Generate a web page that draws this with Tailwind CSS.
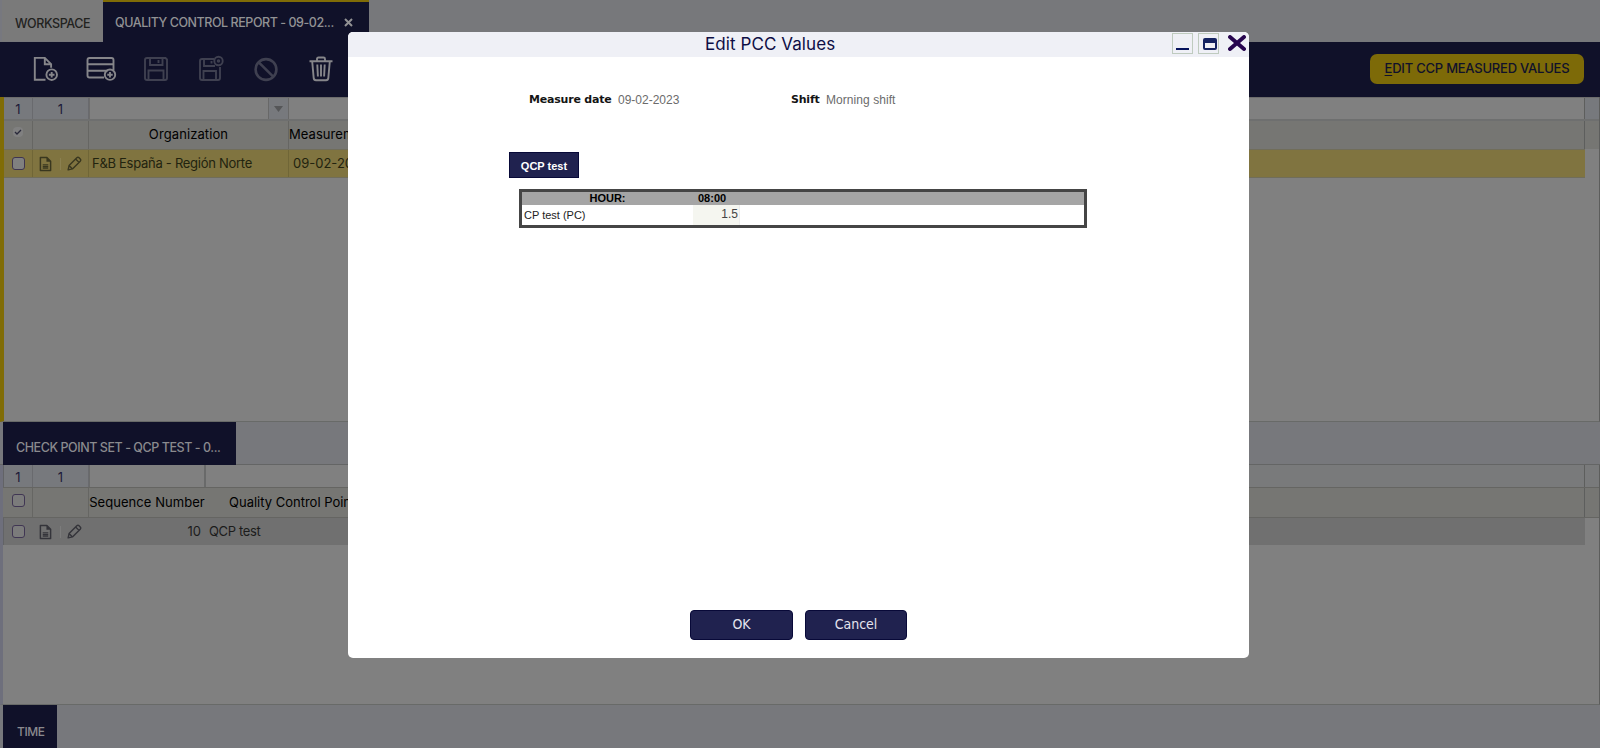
<!DOCTYPE html>
<html lang="en">
<head>
<meta charset="utf-8">
<title>Edit PCC Values</title>
<script src="https://cdn.jsdelivr.net/npm/@tailwindcss/browser@4"></script>
</head>
<body class="relative w-[1600px] h-[748px] overflow-hidden bg-[#808080] font-['Inter',sans-serif] text-[13px] text-black whitespace-nowrap">
<svg class="hidden">
  <symbol id="doc" viewBox="0 0 14 16"><path d="M1.500 1h7L12.500 5V15H1.500z" fill="none" stroke="currentColor" stroke-width="1.600" stroke-linejoin="round"/><path d="M8 1v4.500h4.500z" fill="currentColor"/><path d="M4 9h6M4 10.800h6M4 12.500h6" stroke="currentColor" stroke-width="1.300"/></symbol>
  <symbol id="pen" viewBox="0 0 16 16"><path d="M1.200 14.800l1-4.600 8.300-8.300q1.200-1.100 2.400 0l1.200 1.200q1.100 1.200 0 2.400l-8.300 8.300zM2.200 10.200l3.600 3.600M9.200 3.200l3.600 3.600" fill="none" stroke="currentColor" stroke-width="1.500" stroke-linejoin="round"/></symbol>
</svg>

<div class="flex flex-col h-full">
  <!-- Window tabs -->
  <div class="flex h-[42px] bg-[#77787b] shrink-0">
    <div class="w-[103px] h-[41px] bg-[#7a7a7a] border-l-2 border-[#77787f] pl-[13px] pt-[14px] leading-5 text-[12.500px] tracking-[-0.4px] font-medium text-[#22221f]">WORKSPACE</div>
    <div class="w-[266px] bg-[#101129] border-t-2 border-[#806c06] flex pl-3 pt-[10px] leading-[21px] text-[12.500px] font-medium text-[#929294]">
      <span class="w-[219px] tracking-[-0.45px]">QUALITY CONTROL REPORT - 09-02...</span>
      <svg class="ml-[10px] mt-[6px] size-[9px]" viewBox="0 0 9 9"><path d="M1 1l7 7M8 1l-7 7" stroke="#929294" stroke-width="2"/></svg>
    </div>
  </div>

  <!-- Toolbar -->
  <div class="flex h-[55px] bg-[#101129] shrink-0 items-start pl-[33px] pr-[15px] text-[#86868a]">
    <svg class="w-[26px] h-[26px] mt-[14px]" viewBox="0 0 26 26" fill="none" stroke="currentColor" stroke-width="1.900"><path d="M12.500 23.800H1.800V1.900h10l6.300 6.300v3.600M11.800 1.900v6.300h6.300"/><circle cx="18.700" cy="18.700" r="5.300"/><path d="M18.700 15.900v5.600M15.900 18.700h5.600"/></svg>
    <svg class="w-[31px] h-[26px] mt-[14px] ml-[27px]" viewBox="0 0 31 26" fill="none" stroke="currentColor" stroke-width="1.900"><path d="M18 21.500H3.500q-2 0-2-2V4q0-2 2-2h22q2 0 2 2v10M1.500 8.300h26M1.500 14.700h20"/><circle cx="24" cy="18.700" r="5.200"/><path d="M24 16v5.400M21.300 18.700h5.400"/></svg>
    <svg class="w-[26px] h-[26px] mt-[14px] ml-[26px] text-[#3f4050]" viewBox="0 0 26 26" fill="none" stroke="currentColor" stroke-width="1.900"><path d="M4 2h18.500L24 3.500V22q0 2-2 2H4q-2 0-2-2V4q0-2 2-2zM7 2v7h12.500V2M5.500 24v-9.500h15V24M15.500 4v3"/></svg>
    <svg class="w-[28px] h-[28px] mt-[13px] ml-[28px] text-[#3f4050]" viewBox="0 0 28 28" fill="none" stroke="currentColor" stroke-width="1.900"><path d="M17 4H5Q3 4 3 6v17q0 2 2 2h16q2 0 2-2V12M7 4v7h11M6.500 25v-9h12.500v9M14.500 6v2.500"/><circle cx="21.500" cy="6" r="4.200"/><circle cx="21.500" cy="6" r=".8"/></svg>
    <svg class="w-[26px] h-[26px] mt-[14px] ml-[27px] text-[#3f4050]" viewBox="0 0 26 26" fill="none" stroke="currentColor" stroke-width="2.600"><circle cx="14" cy="13.500" r="10.400"/><path d="M6.800 6.300l14.400 14.400"/></svg>
    <svg class="w-[24px] h-[26px] mt-[14px] ml-[31px]" viewBox="0 0 24 26" fill="none" stroke="currentColor" stroke-width="1.900"><path d="M.5 5.300h23M8 5V3q0-1.500 1.500-1.500h5Q16 1.500 16 3v2M3.200 5.500l1.500 16.700q.2 2 2.200 2h10.200q2 0 2.200-2L20.800 5.500M8.300 8.500l.6 12M12 8.500v12M15.700 8.500l-.6 12"/></svg>
    <div class="ml-auto mr-[1px] mt-[12px] w-[214px] h-[30px] rounded-[7px] bg-[#7d6a08] text-[#10112b] text-[13px] font-medium leading-[29px] text-center tracking-[-0.23px]"><span class="underline underline-offset-2">E</span>DIT CCP MEASURED VALUES</div>
  </div>

  <!-- Header grid -->
  <div class="h-[325px] shrink-0 border-l-4 border-l-[#806c06] border-r border-r-[#5c5d5c] border-b border-b-[#686a68]">
    <div class="flex h-[22px] border-t border-[#6c6c6c] bg-[#77797d] text-[#1c1a38] text-center leading-[23px]">
      <div class="w-[29px] border-r border-[#696a6e]">1</div>
      <div class="w-[56px] border-r border-[#696a6e]">1</div>
      <div class="w-[179px] bg-[#808080] border-l border-[#6c6c6c]"></div>
      <div class="w-[21px] border-x border-[#686868] flex items-center justify-center"><svg class="w-[9px] h-[6px]" viewBox="0 0 9 6"><path d="M0 0h9L4.500 6z" fill="#555658"/></svg></div>
      <div class="flex-1 bg-[#808080] border-r border-[#5d5e5d]"></div>
      <div class="w-[14px]"></div>
    </div>
    <div class="flex h-[30px] bg-[#767673] border-t-2 border-[#6e6f6f] leading-[27px]">
      <div class="w-[29px] border-r border-[#666663] pl-[9px] pt-[6px]"><div class="size-[10px] bg-[#808080] rounded-sm"><svg viewBox="0 0 10 10"><path d="M2 5l2 2 4-4" fill="none" stroke="#29293a" stroke-width="1.300"/></svg></div></div>
      <div class="w-[56px] border-r border-[#666663]"></div>
      <div class="w-[200px] border-r border-[#666663] text-center tracking-[0.1px]">Organization</div>
      <div class="flex-1 border-r border-[#5d5e5d] tracking-[0.06px]">Measurement Date</div>
      <div class="w-[14px]"></div>
    </div>
    <div class="flex h-[29px] mr-[14px] bg-[#807440] border-y border-[#706d5a] leading-[27px] text-[#22230f]">
      <div class="w-[29px] border-r border-[#706637] flex items-center justify-center"><div class="size-[13px] rounded-[3px] border border-[#3f3550] bg-[#808080]"></div></div>
      <div class="w-[56px] border-r border-[#706637] flex items-center pl-[6px] text-[#39371f]"><svg class="w-[13px] h-[16px]"><use href="#doc"/></svg><div class="w-px h-3 bg-[#8b8050] ml-2"></div><svg class="size-[15px] ml-[6px]"><use href="#pen"/></svg></div>
      <div class="w-[200px] border-r border-[#706637] pl-[3px] tracking-[-0.28px]">F&amp;B España - Región Norte</div>
      <div class="pl-1">09-02-2023</div>
    </div>
  </div>

  <!-- Child tab bar -->
  <div class="h-[43px] shrink-0 bg-[#77787c] border-b border-[#646565] pl-[3px]">
    <div class="w-[233px] h-[43px] bg-[#101129] pl-[13px] pt-[15px] leading-[22px] text-[12.500px] tracking-[-0.44px] font-medium text-[#8a8a8e]">CHECK POINT SET - QCP TEST - 0...</div>
  </div>

  <!-- Lines grid -->
  <div class="h-[240px] shrink-0 border-l-[3px] border-l-[#6e6f7c] border-r border-r-[#5c5d5c] border-b border-b-[#686a68]">
    <div class="flex h-[22px] bg-[#797a7b] border-l border-[#626366] text-[#1c1a38] text-center leading-[24px]">
      <div class="w-[29px] bg-[#77797d] border-r border-[#696a6e]">1</div>
      <div class="w-[56px] bg-[#77797d] border-r border-[#696a6e]">1</div>
      <div class="w-[117px] bg-[#808080] border-l border-r-2 border-[#696a6a]"></div>
      <div class="w-[200px] bg-[#808080]"></div>
      <div class="flex-1 border-r border-[#5d5e5d]"></div>
      <div class="w-[14px]"></div>
    </div>
    <div class="flex h-[31px] bg-[#767673] border-t border-b border-[#656562] leading-[28px]">
      <div class="w-[30px] border-r border-[#666663] pl-[9px] pt-[6px]"><div class="size-[13px] rounded-[3px] border border-[#403653] bg-[#7b7b7b]"></div></div>
      <div class="w-[56px] border-r border-[#666663]"></div>
      <div class="w-[116px] text-center tracking-[0.05px]">Sequence Number</div>
      <div class="flex-1 border-r border-[#5d5e5d] pl-6">Quality Control Point</div>
      <div class="w-[14px]"></div>
    </div>
    <div class="flex h-[27px] mr-[14px] bg-[#707070] border-l border-[#626366] leading-[26px] text-[#1c1c1c]">
      <div class="w-[29px] flex items-center justify-center"><div class="size-[13px] rounded-[3px] border border-[#403653] bg-[#7b7b7b]"></div></div>
      <div class="w-[56px] flex items-center pl-[6px] text-[#34343a]"><svg class="w-[13px] h-[16px]"><use href="#doc"/></svg><div class="w-px h-3 bg-[#7c7c7c] ml-2"></div><svg class="size-[15px] ml-[6px]"><use href="#pen"/></svg></div>
      <div class="w-[112px] text-right">10</div>
      <div class="pl-2 tracking-[-0.35px]">QCP test</div>
    </div>
  </div>

  <!-- Bottom tab bar -->
  <div class="flex-1 bg-[#77787c] pl-[3px]">
    <div class="w-[54px] h-full bg-[#101129] pl-[14px] pt-[16px] leading-[21px] text-[12px] tracking-[-0.4px] font-medium text-[#8a8a8e]">TIME</div>
  </div>
</div>

<!-- Dialog -->
<div class="absolute left-[348px] top-[32px] w-[901px] h-[626px] rounded-[5px] bg-white overflow-hidden flex flex-col">
  <div class="h-[25px] shrink-0 bg-[#eff0f6] flex items-start">
    <span class="w-[131px] ml-[357px] text-[17px] leading-[24px] tracking-[0.08px] text-[#0e0e45]">Edit PCC Values</span>
    <div class="flex flex-1 justify-end pr-[3px] pt-[1px]">
      <div class="size-[21px] border border-[#bfcbbf] flex items-end justify-center pb-[3px]"><div class="w-[13px] h-[2px] bg-[#06135c]"></div></div>
      <div class="size-[21px] border border-[#bfcbbf] ml-[5px] pt-[4px] pl-[4px]"><div class="w-[14px] h-[12px] rounded-[2px] border-2 border-t-[5px] border-[#142261] bg-[#eff0f6]"></div></div>
      <svg class="w-[18px] h-[16px] ml-[9px] mt-[2px]" viewBox="0 0 18 16"><path d="M2 2l14 12M16 2L2 14" stroke="#27054f" stroke-width="3.900" stroke-linecap="round"/></svg>
    </div>
  </div>
  <div class="flex items-center h-[20px] mt-[33px] pl-[181px] font-['Liberation_Sans',sans-serif] text-[12px] text-[#6b6b6b]">
    <div class="w-[262px] flex items-center"><b class="font-['DejaVu_Sans',sans-serif] text-[11px] tracking-[-0.2px] text-[#141414] w-[89px]">Measure date</b><span>09-02-2023</span></div>
    <b class="font-['DejaVu_Sans',sans-serif] text-[11px] tracking-[-0.2px] text-[#141414] w-[35px]">Shift</b><span class="tracking-[0.06px]">Morning shift</span>
  </div>
  <div class="mt-[42px] ml-[161px] w-[70px] h-[26px] bg-[#20224f] border border-[#080938] text-white text-center font-bold text-[11px] leading-[26px] font-['Liberation_Sans',sans-serif]">QCP test</div>
  <div class="mt-[11px] ml-[171px] w-[568px] h-[39px] border-[3px] border-[#454545] font-['Liberation_Sans',sans-serif] text-[11px] text-black">
    <div class="h-[13px] bg-[#a5a5a5] flex font-bold leading-[13px]"><span class="w-[171px] text-center">HOUR:</span><span class="pl-[5px]">08:00</span></div>
    <div class="h-[20px] flex leading-[20px]"><span class="w-[171px] pl-[2px] text-[#222]">CP test (PC)</span><span class="w-[47px] h-[20px] bg-[#f5f6f0] border-r border-[#ececec] pr-[1px] text-right text-[12px] text-[#444] leading-[19px]">1.5</span></div>
  </div>
  <div class="mt-auto mb-[18px] pl-[342px] flex gap-[12px] font-['DejaVu_Sans_Condensed','DejaVu_Sans',sans-serif] text-[14px] text-[#e4e4ee] text-center leading-[27px]">
    <div class="w-[103px] h-[30px] rounded-[4px] bg-[#20224f] border border-[#080938]">OK</div>
    <div class="w-[102px] h-[30px] rounded-[4px] bg-[#20224f] border border-[#080938]">Cancel</div>
  </div>
</div>
</body>
</html>
